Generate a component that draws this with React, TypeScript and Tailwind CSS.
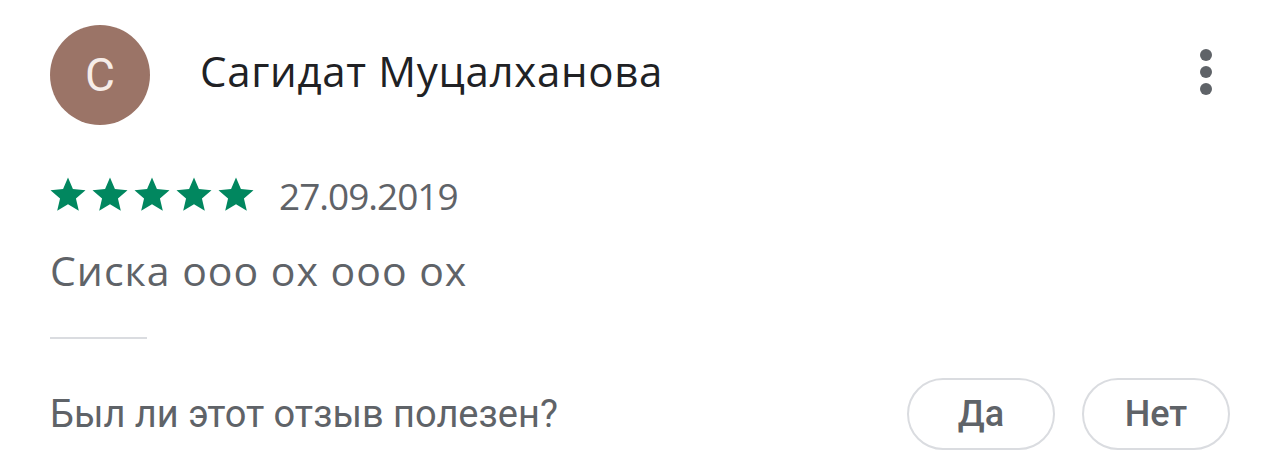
import React from "react";

const Star = () => (
  <svg viewBox="0 0 24 24" className="w-[42px] h-[42px] fill-[#01875f]">
    <path d="M12 17.27L18.18 21l-1.64-7.03L22 9.24l-7.19-.61L12 2 9.19 8.63 2 9.24l5.46 4.73L5.82 21z" />
  </svg>
);

export default function App() {
  return (
    <div className="w-[1280px] h-[466px] bg-white font-['Roboto',sans-serif] px-[50px] pt-[25px]">
      <div className="flex items-center h-[100px]">
        <div className="w-[100px] h-[100px] rounded-full bg-[#9b7467] flex items-center justify-center text-[#f6ece8] text-[46px] leading-none">
          C
        </div>
        <div className="ml-[50px] mb-[8px] text-[42px] leading-none text-[#202124] font-['Open_Sans',sans-serif] tracking-[0.7px]">
          Сагидат Муцалханова
        </div>
        <div className="ml-auto mr-[18px] mb-[6px] flex flex-col gap-[5px]">
          <span className="w-[12px] h-[12px] rounded-full bg-[#5f6368]" />
          <span className="w-[12px] h-[12px] rounded-full bg-[#5f6368]" />
          <span className="w-[12px] h-[12px] rounded-full bg-[#5f6368]" />
        </div>
      </div>

      <div className="flex items-center mt-[49px] h-[42px]">
        <div className="flex -ml-[3px]">
          <Star />
          <Star />
          <Star />
          <Star />
          <Star />
        </div>
        <div className="ml-[22px] text-[37px] leading-none text-[#5f6368] font-['Open_Sans',sans-serif] tracking-[-1px]">
          27.09.2019
        </div>
      </div>

      <div className="mt-[34px] text-[41px] leading-none text-[#5f6368] font-['Open_Sans',sans-serif] tracking-[1px]">
        Сиска ооо ох ооо ох
      </div>

      <div className="mt-[46px] w-[97px] h-[2px] bg-[#dadce0]" />

      <div className="flex items-center mt-[39px] h-[72px]">
        <div className="text-[38px] text-[#5f6368]">Был ли этот отзыв полезен?</div>
        <div className="ml-auto flex gap-[27px]">
          <button className="w-[148px] h-[72px] rounded-full border-2 border-[#dadce0] text-[36px] font-medium text-[#5f6368]">
            Да
          </button>
          <button className="w-[148px] h-[72px] rounded-full border-2 border-[#dadce0] text-[36px] font-medium text-[#5f6368]">
            Нет
          </button>
        </div>
      </div>
    </div>
  );
}
